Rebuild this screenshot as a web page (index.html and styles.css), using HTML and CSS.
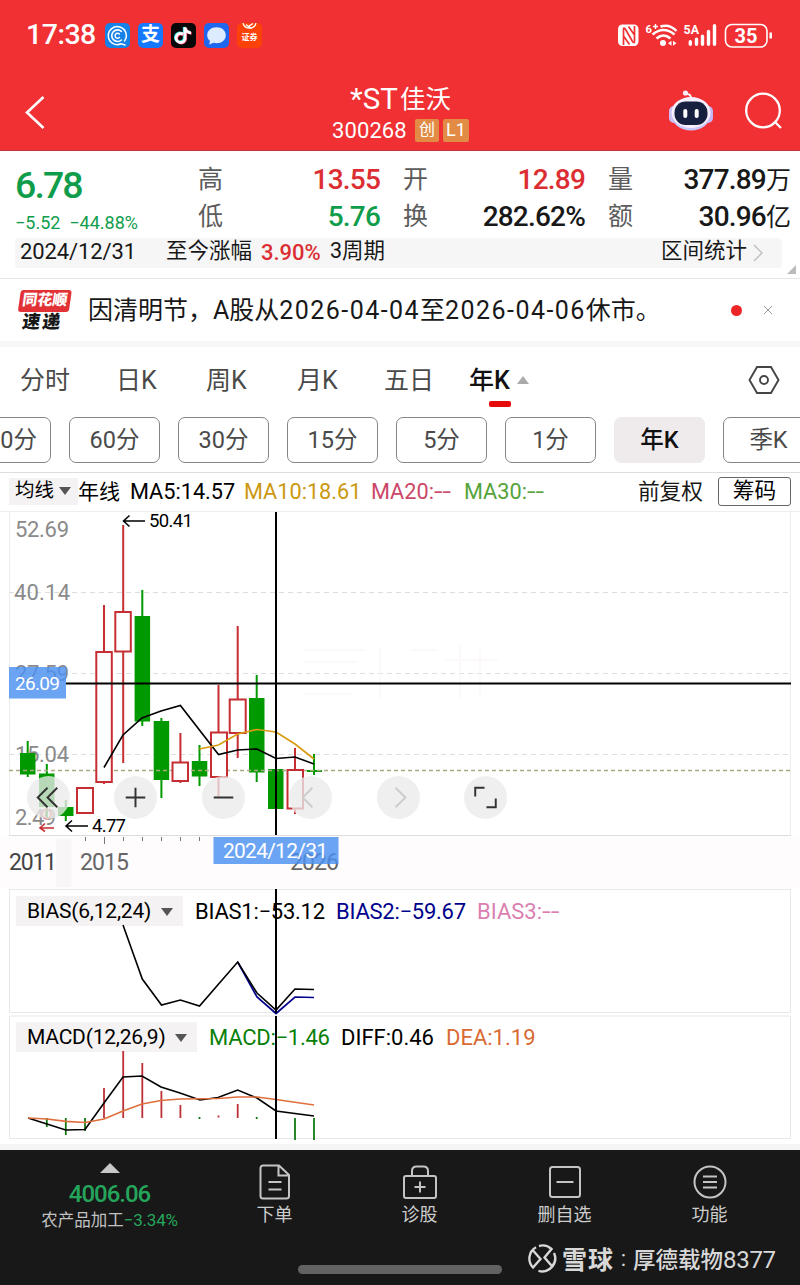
FILE: index.html
```html
<!DOCTYPE html>
<html lang="zh-CN">
<head>
<meta charset="utf-8">
<title>*ST佳沃 300268</title>
<link rel="stylesheet" href="styles.css">
</head>
<body>
<div class="phone">
<header class="top">
  <div class="status">
    <span class="clock">17:38</span>
    <div class="apps">
      <svg width="25" height="25" viewBox="0 0 25 25"><rect width="25" height="25" rx="5" fill="#1682e8"/><g fill="none" stroke="#fff" stroke-linecap="round"><path d="M19.5 18A9 9 0 1 0 16 20.8L20 22" stroke-width="1.5"/><path d="M16.4 8.3A5.8 5.8 0 1 0 16.4 17" stroke-width="1.6"/><path d="M14.4 10.9A2.5 2.5 0 1 0 14.4 14.4" stroke-width="1.5"/></g></svg>
      <span class="app app-pay">支</span>
      <svg width="25" height="25" viewBox="0 0 25 25"><rect width="25" height="25" rx="5" fill="#0a0709"/><g fill="none" stroke-width="2.8"><path d="M12 11.2A4.5 4.5 0 1 0 14 16V4.5C14.4 7.8 17 9.8 20 9.8" stroke="#2ce5e4" transform="translate(-.8 -.6)"/><path d="M12 11.2A4.5 4.5 0 1 0 14 16V4.5C14.4 7.8 17 9.8 20 9.8" stroke="#f83b64" transform="translate(.7 .5)"/><path d="M12 11.2A4.5 4.5 0 1 0 14 16V4.5C14.4 7.8 17 9.8 20 9.8" stroke="#fff"/></g></svg>
      <svg width="25" height="25" viewBox="0 0 25 25"><rect width="25" height="25" rx="5" fill="#1f67ee"/><path d="M12.5 4.2c5.400 0 9.300 3.500 9.300 8s-3.900 8-9.300 8c-1 0-2-.1-2.900-.4L5.200 21.500l.8-3.500c-1.800-1.500-2.800-3.500-2.800-5.800 0-4.500 3.900-8 9.300-8z" fill="#dcebfd"/></svg>
      <span class="app app-sec"><svg width="17" height="9" viewBox="0 0 17 9" fill="none" stroke="#fff"><path d="M2 0A6.700 6.700 0 0 0 15 0M5 1.500L9 5M12 .5L7.500 3.500L11 5.500" stroke-width="1.300"/></svg>证券</span>
    </div>
    <svg class="signals" width="160" height="30" viewBox="616 20 160 30" fill="none" stroke="#fff">
      <rect x="618" y="24.500" width="20.500" height="21.500" rx="4.500" fill="#fff" stroke="none"/>
      <path d="M623.500 45V29.500Q623.500 27 625.500 29.300L632.500 41.500Q634.500 44 634.500 41V26M628.500 26.500L634.500 35M623.500 36L629.500 44.500" stroke="#f03033" stroke-width="1.700"/>
      <text x="645.500" y="33" font-size="11.500" textLength="6.500" lengthAdjust="spacingAndGlyphs" class="sig">6</text><path d="M653 26.500h5M655.500 24v5" stroke-width="1.400"/>
      <path d="M660.500 26.500Q669.500 23.500 676.500 31" stroke-width="2.500"/><path d="M652.500 34.500Q663.500 25.500 674.500 34.500" stroke-width="2.600"/><path d="M656.500 38.500Q663.500 32.500 670.500 38.500" stroke-width="2.600"/>
      <circle cx="663" cy="43" r="3" fill="#fff" stroke="none"/><path d="M671.500 40.800v5l-3.500-2.500zM673 40.800v5l3.500-2.500z" fill="#fff" stroke="none"/>
      <text x="683.500" y="34" font-size="12.500" textLength="15.500" lengthAdjust="spacingAndGlyphs" class="sig">5A</text>
      <g stroke-width="3.400" stroke-linecap="round"><path d="M690.300 44.300v-2.600M696.500 44.300v-5M702.500 44.300v-8M708.500 44.300V31.500M714.500 44.300V25.700"/></g>
      <rect x="725.500" y="24.500" width="41.500" height="22.500" rx="6.500" stroke-width="1.600"/><path d="M770.700 32.500v6" stroke-width="2.500"/>
      <text x="734.500" y="43" font-size="20" textLength="23" class="sig batt">35</text>
    </svg>
  </div>
  <div class="titlebar">
    <svg width="24" height="36" viewBox="22 94 24 36" fill="none" stroke="#fff" stroke-width="2.600"><path d="M43.500 97L27 112.500L43.500 128"/></svg>
    <div class="title">
      <h1><span>*ST</span>佳沃</h1>
      <div class="code"><span>300268</span><b>创</b><b class="l1">L1</b></div>
    </div>
    <div class="title-actions">
      <svg width="46" height="44" viewBox="668 88 46 44"><path d="M691 98c0-4-1-5-4-5" fill="none" stroke="#fff" stroke-width="2"/><circle cx="685.500" cy="92" r="2.600" fill="#f7eefa"/><rect x="669" y="105" width="10" height="17" rx="5" fill="#cdbff5"/><rect x="703" y="105" width="10" height="17" rx="5" fill="#c3b4f6"/><ellipse cx="691" cy="113" rx="20" ry="16.500" fill="#c9c6fb"/><ellipse cx="691" cy="111.500" rx="19.500" ry="15.500" fill="#f7effd"/><rect x="674.500" y="100.500" width="33" height="23.500" rx="11" fill="#17203f"/><path d="M685.300 110v5M696.700 110v5" stroke="#fff" stroke-width="4" stroke-linecap="round"/></svg>
      <svg width="42" height="42" viewBox="742 89 42 42" fill="none" stroke="#fff" stroke-width="2.300"><circle cx="763" cy="110.500" r="16.800"/><path d="M774.500 121.500L781 128"/></svg>
    </div>
  </div>
</header>

<section class="quote">
  <div class="price"><strong>6.78</strong><span>−5.52&nbsp; −44.88%</span></div>
  <dl class="stats">
    <dt>高</dt><dd class="up">13.55</dd><dt>开</dt><dd class="up">12.89</dd><dt>量</dt><dd>377.89<i>万</i></dd>
    <dt>低</dt><dd class="down">5.76</dd><dt>换</dt><dd>282.62%</dd><dt>额</dt><dd>30.96<i>亿</i></dd>
  </dl>
  <div class="range"><span class="date">2024/12/31</span><span class="since">至今涨幅</span><b>3.90%</b><span>3周期</span><span class="stat-link">区间统计</span><svg width="12" height="20" viewBox="0 0 12 20" fill="none" stroke="#bbb" stroke-width="1.300"><path d="M2 2l8 8-8 8"/></svg></div>
  <i class="corner"></i>
</section>

<section class="notice">
  <div class="express"><span class="brand">同花顺</span><span class="fast">速递</span></div>
  <p>因清明节，A股从<span class="day">2026-04-04</span>至<span class="day">2026-04-06</span>休市。</p>
  <i class="dot"></i>
  <svg width="10" height="10" viewBox="0 0 10 10" stroke="#999" stroke-width="1"><path d="M1 1l8 8M9 1L1 9"/></svg>
</section>

<nav class="tabs"><span>分时</span><span>日K</span><span>周K</span><span>月K</span><span>五日</span><span class="active">年K<i></i></span>
  <svg width="32" height="30" viewBox="0 0 32 30" fill="none" stroke="#444" stroke-width="1.900"><path d="M9 2h14l7.500 13L23 28H9L1.500 15z"/><circle cx="16" cy="15" r="4"/></svg>
</nav>
<div class="pills"><span>120分</span><span>60分</span><span>30分</span><span>15分</span><span>5分</span><span>1分</span><span class="active">年K</span><span>季K</span></div>

<div class="ma"><span class="ma-type">均线<i class="caret"></i></span><span class="ma-year">年线</span><span class="m5">MA5:14.57</span><span class="m10">MA10:18.61</span><span class="m20">MA20:<em>--</em></span><span class="m30">MA30:<em>--</em></span><span class="adjust">前复权</span><span class="chips">筹码</span></div>

<section class="kline stack">
  <svg width="800" height="377" viewBox="0 512 800 377">
    <path d="M9.500 835.500V511.800M790.500 512V835" stroke="#ececec"/>
    <g stroke="#ddd" stroke-dasharray="5 4"><path d="M9 592.500H791M9 673.500H791M9 754.500H791"/></g>
    <g class="axis"><text x="15" y="537" textLength="54">52.69</text><text x="14" y="600" textLength="56">40.14</text><text x="15" y="681" textLength="54">27.59</text><text x="15" y="762" textLength="54">15.04</text><text x="15" y="825" textLength="41">2.49</text></g>
    <g opacity=".5" stroke="#fbf3f3" stroke-width="2" fill="none"><path d="M304 650h60M304 662h54M304 694h48M380 648v50M412 650h24M445 660h53M460 644v54M480 650v48"/></g>
    <g stroke="#009a00" stroke-width="2"><path d="M27.700 741V777M46.800 764V817M65.800 800V821M142.300 590V726M161.400 718V798M199.500 745V786M256.700 675V782M276 769V809M314 754V775M307 771H322"/></g>
    <g fill="#009a00"><path d="M20 753h15.500v21.500H20zM39 773.500h15.500V807H39zM58 807h15.500v9H58zM134.600 616h15.500v105.500h-15.500zM153.700 721h15.500v59h-15.500zM191.800 761h15.500v15.500h-15.500zM249 698h15.500v74.500H249zM268 769h15.500v40H268z"/></g>
    <path d="M9 770.500H791" stroke="#aaa985" stroke-dasharray="4 3" stroke-width="1.300"/>
    <g fill="#fff" stroke="#c52e32" stroke-width="2"><path fill="none" d="M104 605V651M104 782V784M123.200 525V611M123.200 651V763M180.400 733V762M180.400 781V783M218.500 685V732M218.500 777V797M237.700 626V699M237.700 733V758M295 748V769M295 809V814"/><path d="M77 788h16v25H77zM96.300 652h15.500v130H96.300zM115.300 612h15.500v39.500h-15.500zM172.500 762.500H188v18.500h-15.500zM211 732.500h16V777h-16zM229.700 699.500h16V733h-16zM287.500 770H303v38.500h-15.500z"/></g>
    <circle cx="46.500" cy="814" r="4.500" fill="none" stroke="#d66" stroke-width="2"/>
    <path d="M54 828H40M45 823.500L40 828L45 831.500" fill="none" stroke="#c52e32" stroke-width="1.600"/>
    <path d="M104 767.500L123 735L142 718L161 711L180.400 705.500L218.500 754.500L237.700 750L257 749L276 758.500L295 757L314 764" fill="none" stroke="#000" stroke-width="1.600"/>
    <path d="M199.500 749L218.500 745L237.700 734L257 729.500L276 732L295 744L314 759" fill="none" stroke="#d99b14" stroke-width="1.700"/>
    <path d="M145 521H123.500M129.500 515.500L123.500 521L129.500 526.500M88 826H66M72 820.500L66 826L72 831.500" fill="none" stroke="#000" stroke-width="1.500"/>
    <g class="mark"><text x="149" y="527" textLength="44">50.41</text><text x="92" y="832" textLength="34">4.77</text></g>
    <path d="M9 835.500H791" stroke="#ddd"/>
    <path d="M0 836H800V889H0z" fill="#fefcfd"/><path d="M56 839H71.500V887H56z" fill="#f8f6f7"/>
    <path d="M85.500 837v4M123.500 837v4M142.500 837v4M161.500 837v4M180.500 837v4M199.500 837v4M104.500 837v7" stroke="#777"/>
    <g class="axis year"><text x="9" y="870" textLength="48" class="first">2011</text><text x="80" y="870" textLength="49">2015</text><text x="290" y="870" textLength="49">2026</text></g>
    <path d="M66 683.500H791M276 512V835" stroke="#000" stroke-width="2"/>
    <path d="M9 667H66V698.500H9z" fill="#4a90f0" fill-opacity=".82"/><path d="M213.500 837H338.500V864H213.500z" fill="#4a90f0" fill-opacity=".82"/>
    <g class="flag"><text x="15" y="690" textLength="45">26.09</text><text x="223" y="858" textLength="105" class="big">2024/12/31</text></g>
  </svg>
  <div class="controls">
    <svg viewBox="0 0 44 44"><path d="M21 12L11 22l10 10M31 12L21 22l10 10"/></svg>
    <svg viewBox="0 0 44 44"><path d="M22 12v20M12 22h20"/></svg>
    <svg viewBox="0 0 44 44"><path d="M12 22h20"/></svg>
    <svg viewBox="0 0 44 44" class="dim"><path d="M24 12L14 22l10 10"/></svg>
    <svg viewBox="0 0 44 44" class="dim"><path d="M19 12l10 10-10 10"/></svg>
    <svg viewBox="0 0 44 44"><path d="M11.500 21V12H21M32.500 23v9H23"/></svg>
  </div>
</section>

<section class="indicator bias stack">
  <div class="legend"><span class="pick">BIAS(6,12,24)<i class="caret"></i></span><span class="b1">BIAS1:−53.12</span><span class="b2">BIAS2:−59.67</span><span class="b3">BIAS3:<em>--</em></span></div>
  <svg width="800" height="126" viewBox="0 889 800 126" fill="none"><path d="M9.500 889.500H790.500V1012.500H9.500z" stroke="#e8e8e8"/><path d="M237.700 962L257 997L276 1013.500L295 997L314 997.500" stroke="#00008c" stroke-width="1.700"/><path d="M123 925L142.300 979L161.500 1005L180.400 1000L199.500 1006L237.700 962L257 993L276 1010L295 989L314 989.500" stroke="#000" stroke-width="1.600"/><path d="M276 889V1013" stroke="#000" stroke-width="2"/></svg>
</section>
<section class="indicator macd stack">
  <div class="legend"><span class="pick">MACD(12,26,9)<i class="caret"></i></span><span class="c1">MACD:−1.46</span><span class="c2">DIFF:0.46</span><span class="c3">DEA:1.19</span></div>
  <svg width="800" height="129" viewBox="0 1015 800 129" fill="none"><path d="M9.500 1016H790.500V1138.500H9.500z" stroke="#e8e8e8"/><path d="M104 1088V1118M123.200 1051V1118M142.300 1063V1118M161.400 1091V1118M180.400 1105V1118M237.700 1104V1118M218.500 1115.500V1117.500" stroke="#bd3038" stroke-width="1.800"/><path d="M46.800 1118V1127M65.800 1118V1135M85 1118V1131M295 1118V1140M314 1118V1140M199.500 1117V1119M256.700 1117V1119" stroke="#137a13" stroke-width="1.800"/><path d="M28 1118L65.700 1130L85 1129.500L104 1103L123 1077L142 1076L161 1087L180 1093L200 1100L218 1097.500L237.700 1090L257 1098L276 1111L314 1116" stroke="#000" stroke-width="1.600"/><path d="M28 1118L47 1119L66 1121.300L85 1122.500L104 1119L123 1111L142 1104L161 1100.500L180 1099L218 1098.500L237.700 1097L257 1097L276 1099.500L314 1105" stroke="#df6f3c" stroke-width="1.700"/><path d="M276 1016V1139" stroke="#000" stroke-width="2"/></svg>
</section>

<footer class="bottom">
  <nav>
    <div class="sector"><i></i><strong>4006.06</strong><span>农产品加工<b>−3.34%</b></span></div>
    <div class="item"><svg viewBox="0 0 36 36"><path d="M22 1.500H6a2.500 2.500 0 0 0-2.500 2.500v28A2.500 2.500 0 0 0 6 34.500h23.500A2.500 2.500 0 0 0 32 32V11zM21.500 2v9.500H32M11.500 18h13M11.500 25.500h13"/></svg>下单</div>
    <div class="item"><svg viewBox="0 0 36 36"><path d="M4 12h28q2 0 2 2v18q0 2-2 2H4q-2 0-2-2V14q0-2 2-2zM10 12V7q0-4.500 4.500-4.500h7Q26 2.500 26 7v5M18 17.500v11M12.500 23h11"/></svg>诊股</div>
    <div class="item"><svg viewBox="0 0 36 36"><rect x="3" y="3" width="30" height="30" rx="2.500"/><path d="M9.500 18h17"/></svg>删自选</div>
    <div class="item"><svg viewBox="0 0 36 36"><circle cx="18" cy="18" r="15.500"/><path d="M11 12.500h14M11 18h14M11 23.500h14"/></svg>功能</div>
  </nav>
  <div class="home">
    <i class="bar"></i>
    <svg width="29" height="29" viewBox="0 0 29 29" fill="none" stroke="#d8d8d8" stroke-width="2.400"><path d="M11 2A13 13 0 0 1 23.500 5L16.500 13.500L24.500 22.800M26 9A13 13 0 0 1 10.500 26.800M8 3.200A13 13 0 0 0 5 23.500L12.500 15L5 6.500"/></svg>
    <span class="xq">雪球</span><span class="colon">:</span><span class="author">厚德载物<span>8377</span></span>
  </div>
</footer>
</div>
</body>
</html>
```
FILE: styles.css
```css
* { box-sizing: border-box; }
body { margin: 0; background: #fff; color: #181818; font-family: Roboto, "Noto Sans CJK SC", sans-serif; }
i, em { font-style: normal; }
.phone { width: 800px; height: 1285px; overflow: hidden; display: flex; flex-direction: column; white-space: nowrap; }
.phone > * { flex-shrink: 0; }
svg { display: block; flex-shrink: 0; }

.top { height: 151px; background: #f03033; color: #fff; border-bottom: 1px solid #c93439; }
.status { height: 70px; display: flex; align-items: center; padding: 0 24px 0 26px; }
.clock { width: 79px; font-size: 28.500px; font-weight: 500; letter-spacing: -.5px; line-height: 30px; }
.apps { display: flex; gap: 8px; flex: 1; }
.app { width: 25px; height: 25px; border-radius: 5px; background: #1677ff; font-weight: 700; text-align: center; overflow: hidden; }
.app-pay { font-size: 19px; line-height: 24px; }
.app-sec { background: #fc4208; font-size: 8px; line-height: 12px; }
.app-sec svg { margin: 0 auto; }
.sig { fill: #fff; stroke: none; font-weight: 700; }
.titlebar { height: 80px; padding: 10px 16px 0 22px; display: flex; justify-content: space-between; }
.titlebar > svg { margin-top: 14px; }
.title { width: 160px; margin-left: 87px; display: flex; flex-direction: column; align-items: center; }
h1 { margin: 0; font-size: 25.500px; font-weight: 400; line-height: 38px; display: flex; }
h1 span { font-size: 29.500px; margin-right: 2px; }
.code { display: flex; align-items: center; height: 24px; font-size: 22px; letter-spacing: .1px; }
.code span { width: 83px; }
.code b { width: 24px; height: 23px; line-height: 22px; font-size: 16px; font-weight: 400; background: #e28b45; border-radius: 2px; text-align: center; margin-right: 4px; }
.code .l1 { width: 26px; font-size: 18px; margin-right: 0; }
.title-actions { display: flex; gap: 28px; padding-top: 9px; }

.quote { height: 128px; border-bottom: 1px solid #e6e6e6; position: relative; display: grid; grid-template-columns: 183px 1fr; grid-template-rows: 87px 30px; padding: 0 9px 0 15px; }
.price { color: #0f9d4c; display: flex; flex-direction: column; padding-top: 12px; }
.price strong { font-size: 37.500px; font-weight: 500; line-height: 44px; letter-spacing: -1.900px; }
.price span { font-size: 18px; line-height: 31px; margin-left: 0; }
.stats { margin: 0; display: grid; grid-template-columns: 44px 139px 22px 44px 139px 22px 44px 1fr; grid-template-rows: 37px 37px; padding-top: 10px; line-height: 37px; }
.stats dt { font-size: 25px; color: #5c5c5c; }
.stats dt:nth-of-type(3n+2) { grid-column: 4; }
.stats dt:nth-of-type(3n) { grid-column: 7; }
.stats dd { margin: 0 1px 0 -1px; font-size: 28px; font-weight: 500; text-align: right; letter-spacing: -.8px; }
.stats dd i { font-size: 25px; letter-spacing: 0; font-weight: 400; margin-right: -1px; }
.up { color: #dc2e32; } .down { color: #0f9d4c; }
.range { grid-column: 1 / 3; width: 767px; height: 30px; background: #f6f6f6; border-radius: 4px; display: flex; align-items: center; padding: 0 18px 0 5px; font-size: 21.500px; line-height: 26px; }
.range > span, .range b { margin-top: -4px; }
.date { width: 146px; font-size: 22px; letter-spacing: -.1px; padding-top: 2px; }
.since { width: 95px; }
.range b { width: 69px; color: #dc2e32; font-weight: 500; font-size: 22px; padding-top: 3px; }
.stat-link { margin-left: auto; margin-right: 5px; }
.corner { position: absolute; right: 4px; bottom: 4px; border-left: 9px solid transparent; border-bottom: 9px solid #bbb; }

.notice { height: 68px; border-bottom: 6px solid #f7f7f7; display: flex; align-items: center; padding: 0 27px 0 18px; }
.express { width: 70px; display: flex; flex-direction: column; font-weight: 900; transform: skewX(-8deg); }
.brand { width: 51px; height: 22px; line-height: 20px; background: #e33236; color: #fff; border-radius: 3px; font-size: 15px; text-align: center; }
.fast { font-size: 18px; line-height: 19px; padding-left: 6px; letter-spacing: 2px; }
.notice p { margin: -4px 0 0; font-size: 25px; flex: 1; }
.day { letter-spacing: 1.450px; }
.dot { width: 11px; height: 11px; border-radius: 50%; background: #ec2526; margin-right: 21px; }

.tabs { height: 70px; display: grid; grid-template-columns: 96px 90px 91px 87px 85px 279px 32px; padding: 0 0 8px 20px; align-items: center; font-size: 25px; color: #4a4a4a; }
.tabs > span { margin-top: -1px; }
.tabs svg { margin-top: 3px; }
.tabs .active { color: #111; font-weight: 500; position: relative; }
.tabs .active i { display: inline-block; border: 6px solid transparent; border-top: 0; border-bottom: 8px solid #aaa; margin: 0 0 5px 7px; }
.tabs .active::after { content: ""; position: absolute; left: 20px; bottom: -11px; width: 22px; height: 6px; border-radius: 2px; background: #e60b0b; }
.pills { height: 56px; display: flex; gap: 18px; margin-left: -40px; border-bottom: 1px solid #ddd; color: #4a4a4a; }
.pills span { width: 91px; height: 46px; flex-shrink: 0; border: 1px solid #858585; border-radius: 7px; font-size: 23.500px; line-height: 44px; text-align: center; }
.pills .active { background: #efebed; border-color: #efebed; color: #111; font-weight: 500; }

.ma { height: 39px; display: flex; align-items: center; padding: 0 9px; border-bottom: 1px solid #eee; font-size: 21.700px; }
.ma > span { margin-top: -1px; }
.ma-type { width: 69px; height: 27px; line-height: 25px; background: #f5f2f3; padding-left: 6px; font-size: 19.500px; color: #000; }
.caret { display: inline-block; border: 6px solid transparent; border-bottom: 0; border-top: 8px solid #555; margin-left: 5px; vertical-align: 2px; }
.ma-year { width: 52px; font-size: 21px; line-height: 26px; color: #000; }
.m5 { width: 114px; color: #000; } .m10 { width: 127px; color: #cc9811; } .m20 { width: 93px; color: #cb4768; } .m30 { color: #55a33a; }
em { letter-spacing: 0; display: inline-block; transform: scaleX(1.42); transform-origin: left; }
.ma .adjust { margin-left: auto; margin-right: 15px; margin-top: -5px; }
.ma .chips { width: 73px; height: 29px; line-height: 26px; border: 1px solid #666; border-radius: 3px; text-align: center; color: #000; }

.stack { display: grid; }
.stack > * { grid-area: 1 / 1; }
.kline { height: 377px; }
.axis text { font-size: 22px; fill: #8a8a8a; } .year text { fill: #666; font-size: 23px; } .year .first { fill: #444; }
.mark text { font-size: 18.500px; fill: #000; }
.flag text { font-size: 19px; fill: #fff; } .flag .big { font-size: 21px; }
.controls { display: flex; gap: 44.400px; padding: 264px 0 0 27px; }
.controls svg { width: 43px; height: 43px; border-radius: 50%; background: rgba(235, 235, 235, .78); fill: none; stroke: #333; stroke-width: 2; }
.controls .dim { stroke: #ccc; }

.bias { height: 126px; } .macd { height: 129px; }
.indicator { background: #fff; }
.legend { display: flex; align-items: center; height: 30px; margin: 7px 0 0 16px; font-size: 22px; color: #000; }
.pick { height: 30px; line-height: 30px; background: #f5f2f3; padding-left: 11px; font-size: 21px; letter-spacing: -.22px; }
.pick .caret { margin-left: 10px; }
.bias .pick { width: 167px; margin-right: 12px; } .macd .pick { width: 181px; margin-right: 12px; }
.b1, .b2 { width: 141px; letter-spacing: -.25px; } .b2 { color: #00008c; } .b3 { color: #db7fb0; }
.c1 { width: 132px; color: #087f08; letter-spacing: -.25px; } .c2 { width: 105px; } .c3 { color: #d96a34; }

.bottom { height: 141px; border-top: 6px solid #f5f5f5; background: #181818; color: #ccc; }
.bottom nav { height: 83px; display: grid; grid-template-columns: 202px repeat(4, 145px); }
.sector { padding: 13px 0 0 17px; display: flex; flex-direction: column; align-items: center; color: #c2c2c2; }
.sector i { border: 10px solid transparent; border-top: 0; border-bottom: 10px solid #c8c8c8; }
.sector strong { font-size: 24px; line-height: 30px; margin-top: 6px; font-weight: 500; color: #25a55b; letter-spacing: -1px; }
.sector span { font-size: 16.500px; line-height: 22px; }
.sector b { font-weight: 400; color: #25a55b; font-size: 17px; letter-spacing: -.2px; }
.item { display: flex; flex-direction: column; align-items: center; padding-top: 14px; font-size: 18px; line-height: 29px; }
.item svg { width: 36px; height: 36px; fill: none; stroke: #c4c4c4; stroke-width: 2; }
.home { height: 50px; display: flex; align-items: center; padding-left: 298px; color: #d8d8d8; }
.bar { width: 204px; height: 9px; border-radius: 5px; background: #626262; margin: 23px 26px 0 0; }
.xq { font-size: 25px; font-weight: 700; margin-left: 5px; letter-spacing: 1px; }
.colon { width: 19px; text-align: center; font-size: 22px; }
.author { font-size: 22.500px; font-weight: 500; }
.author span { font-size: 24px; font-weight: 400; letter-spacing: -.3px; }
```
